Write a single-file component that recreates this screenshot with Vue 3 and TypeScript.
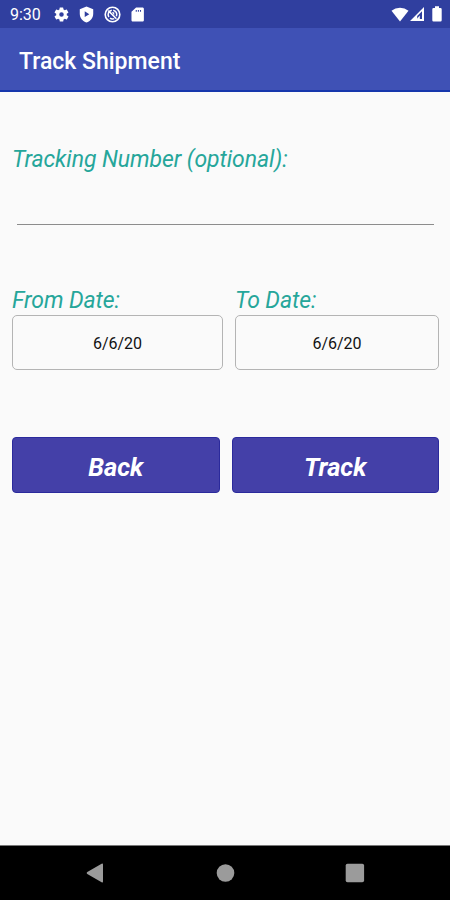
<script setup lang="ts">
import { ref } from 'vue'

interface DateField {
  label: string
  value: string
}

const trackingNumber = ref<string>('')
const dates = ref<DateField[]>([
  { label: 'From Date:', value: '6/6/20' },
  { label: 'To Date:', value: '6/6/20' },
])
const actions: string[] = ['Back', 'Track']
</script>

<template>
  <div class="screen">
    <div class="status">
      <span class="clock">9:30</span>
      <svg class="ico gear" viewBox="0 0 24 24"><path fill-rule="evenodd" d="M19.4 13a7.500 7.500 0 0 0 0-2l2.100-1.600a.5.5 0 0 0 .1-.6l-2-3.500a.5.5 0 0 0-.6-.2l-2.500 1a7.500 7.500 0 0 0-1.700-1l-.4-2.600a.5.5 0 0 0-.5-.5h-4a.5.5 0 0 0-.5.5L9.100 5.100a7.500 7.500 0 0 0-1.700 1l-2.500-1a.5.5 0 0 0-.6.2l-2 3.500a.5.5 0 0 0 .1.6L4.600 11a7.500 7.500 0 0 0 0 2l-2.200 1.600a.5.5 0 0 0-.1.6l2 3.500c.1.200.4.300.6.200l2.500-1a7.500 7.500 0 0 0 1.700 1l.4 2.600c0 .3.200.5.500.5h4c.3 0 .5-.2.500-.5l.4-2.600a7.500 7.500 0 0 0 1.700-1l2.500 1c.2.100.5 0 .6-.2l2-3.500a.5.5 0 0 0-.1-.6zM12 15.200a3.200 3.200 0 1 1 0-6.400 3.200 3.200 0 0 1 0 6.400z" /></svg>
      <svg class="ico shield" viewBox="0 0 24 24"><path fill-rule="evenodd" d="M12 .8 2.500 4.500V11c0 5.600 4 10.700 9.500 12.200 5.500-1.500 9.500-6.600 9.500-12.200V4.500zM9.500 7.500l6.500 4-6.500 4z" /></svg>
      <svg class="ico disc" viewBox="0 0 24 24">
        <circle cx="12" cy="12" r="10.300" fill="none" stroke="#fff" stroke-width="2.300" />
        <path d="M6.900 15.500A6.200 6.200 0 0 1 11 5.900M13 5.900a6.200 6.200 0 0 1 4.500 8.600M8.500 17a6.200 6.200 0 0 0 6 .8M6 6.500l11.500 11.500" fill="none" stroke="#fff" stroke-width="2.200" />
        <path d="M11 8.800h3.500v4.500z" />
      </svg>
      <svg class="ico card" viewBox="0 0 24 24"><path fill-rule="evenodd" d="M19 2h-9L3.500 8v12c0 1.100.9 2 2 2H19c1.100 0 2-.9 2-2V4c0-1.100-.9-2-2-2zM9.500 5.500H11V8H9.500zM12.500 5.500H14V8h-1.500zM15.500 5.500H17V8h-1.500z" /></svg>
      <span class="spacer"></span>
      <svg class="wifi" viewBox="0 0 18 15"><path d="M9 14.500.5 3.700Q4.200.7 9 .7t8.500 3z" /></svg>
      <svg class="signal" viewBox="0 0 14 14"><path fill-rule="evenodd" d="M14 0v14H0zM12 4.200 7.200 9v3H12z" /><path d="M9.800 8.500v3.800H6.500z" /></svg>
      <svg class="battery" viewBox="0 0 10 16"><path d="M3 .3h4V2h1.500Q9.700 2 9.700 3.200v11q0 1.300-1.200 1.300h-7Q.3 15.500.3 14.200v-11Q.3 2 1.500 2H3z" /></svg>
    </div>

    <header class="bar"><h1>Track Shipment</h1></header>

    <main class="body">
      <label class="label" for="tracking">Tracking Number (optional):</label>
      <input id="tracking" v-model="trackingNumber" class="field" type="text" />
      <div class="dates">
        <div v-for="d in dates" :key="d.label" class="date">
          <span class="label">{{ d.label }}</span>
          <button class="picker" type="button">{{ d.value }}</button>
        </div>
      </div>
      <div class="actions">
        <button v-for="a in actions" :key="a" class="action" type="button">{{ a }}</button>
      </div>
    </main>

    <nav class="nav">
      <svg viewBox="0 0 20 20"><path d="M2.300 9.100 16.600.8Q18 .2 18 1.500v17q0 1.300-1.400.7L2.300 10.900q-1.500-.9 0-1.800z" /></svg>
      <svg viewBox="0 0 20 20"><circle cx="10.500" cy="10" r="8.800" /></svg>
      <svg viewBox="0 0 20 20"><rect x=".7" y=".7" width="18.400" height="18.600" rx="1.800" /></svg>
    </nav>
  </div>
</template>

<style>
body {
  margin: 0;
  background: #fafafa;
}
</style>

<style scoped>
.screen {
  display: flex;
  flex-direction: column;
  width: 450px;
  height: 900px;
  overflow: hidden;
  background: #fafafa;
  font-family: Roboto, "Liberation Sans", sans-serif;
}
.status {
  display: flex;
  align-items: center;
  flex: none;
  box-sizing: border-box;
  height: 28px;
  padding: 1px 8px 0 10px;
  background: #303f9f;
  color: #fff;
}
.status svg {
  display: block;
  flex: none;
  fill: #fff;
}
.clock {
  width: 43px;
  padding-top: 1px;
  font-size: 16px;
  line-height: 28px;
}
.ico {
  width: 17px;
  height: 17px;
}
.shield {
  margin-left: 8px;
}
.disc {
  margin-left: 9px;
}
.card {
  margin-left: 8px;
}
.spacer {
  flex: 1;
}
.wifi {
  width: 18px;
  height: 15px;
  margin-bottom: 1px;
}
.signal {
  width: 14px;
  height: 14px;
  margin-left: 1px;
  margin-bottom: 1px;
}
.battery {
  width: 10px;
  height: 16px;
  margin-left: 8px;
  margin-bottom: 1px;
}
.bar {
  display: flex;
  align-items: center;
  flex: none;
  box-sizing: border-box;
  height: 64px;
  padding: 5px 19px 0;
  background: #3f51b5;
  border-bottom: 2px solid #1636ac;
}
.bar h1 {
  margin: 0;
  font-size: 23px;
  font-weight: 500;
  line-height: 30px;
  color: #fff;
}
.body {
  flex: 1;
  display: flex;
  flex-direction: column;
  padding: 54px 11px 0 12px;
}
.label {
  display: block;
  font-size: 23px;
  font-style: italic;
  font-weight: 400;
  line-height: 28px;
  letter-spacing: -0.07px;
  color: #26a69a;
  white-space: nowrap;
}
.field {
  height: 51px;
  margin: 0 5px;
  box-sizing: border-box;
  padding: 0;
  border: 0;
  border-bottom: 1px solid #8c8c8c;
  outline: none;
  background: transparent;
  font: 20px Roboto, sans-serif;
}
.dates {
  display: grid;
  grid-template-columns: 211px 204px;
  gap: 12px;
  margin-top: 62px;
}
.picker {
  display: block;
  box-sizing: border-box;
  width: 100%;
  height: 55px;
  padding: 2px 0 0;
  border: 1px solid #b4b4b4;
  border-radius: 5px;
  background: #fafafa;
  font: 400 16px/20px Roboto, sans-serif;
  color: #111;
}
.actions {
  display: grid;
  grid-template-columns: 1fr 1fr;
  gap: 12px;
  margin-top: 67px;
}
.action {
  height: 56px;
  padding: 3px 0 0;
  border: 1px solid #2b2a9c;
  border-radius: 4px;
  background: #4440a8;
  font: italic 700 25.500px/30px Roboto, sans-serif;
  color: #fff;
}
.nav {
  display: flex;
  justify-content: space-between;
  flex: none;
  box-sizing: border-box;
  height: 55px;
  padding: 17px 85px 0;
  border-top: 1px solid #777;
  background: #000;
}
.nav svg {
  width: 20px;
  height: 20px;
  fill: #9b9b9b;
}
</style>
